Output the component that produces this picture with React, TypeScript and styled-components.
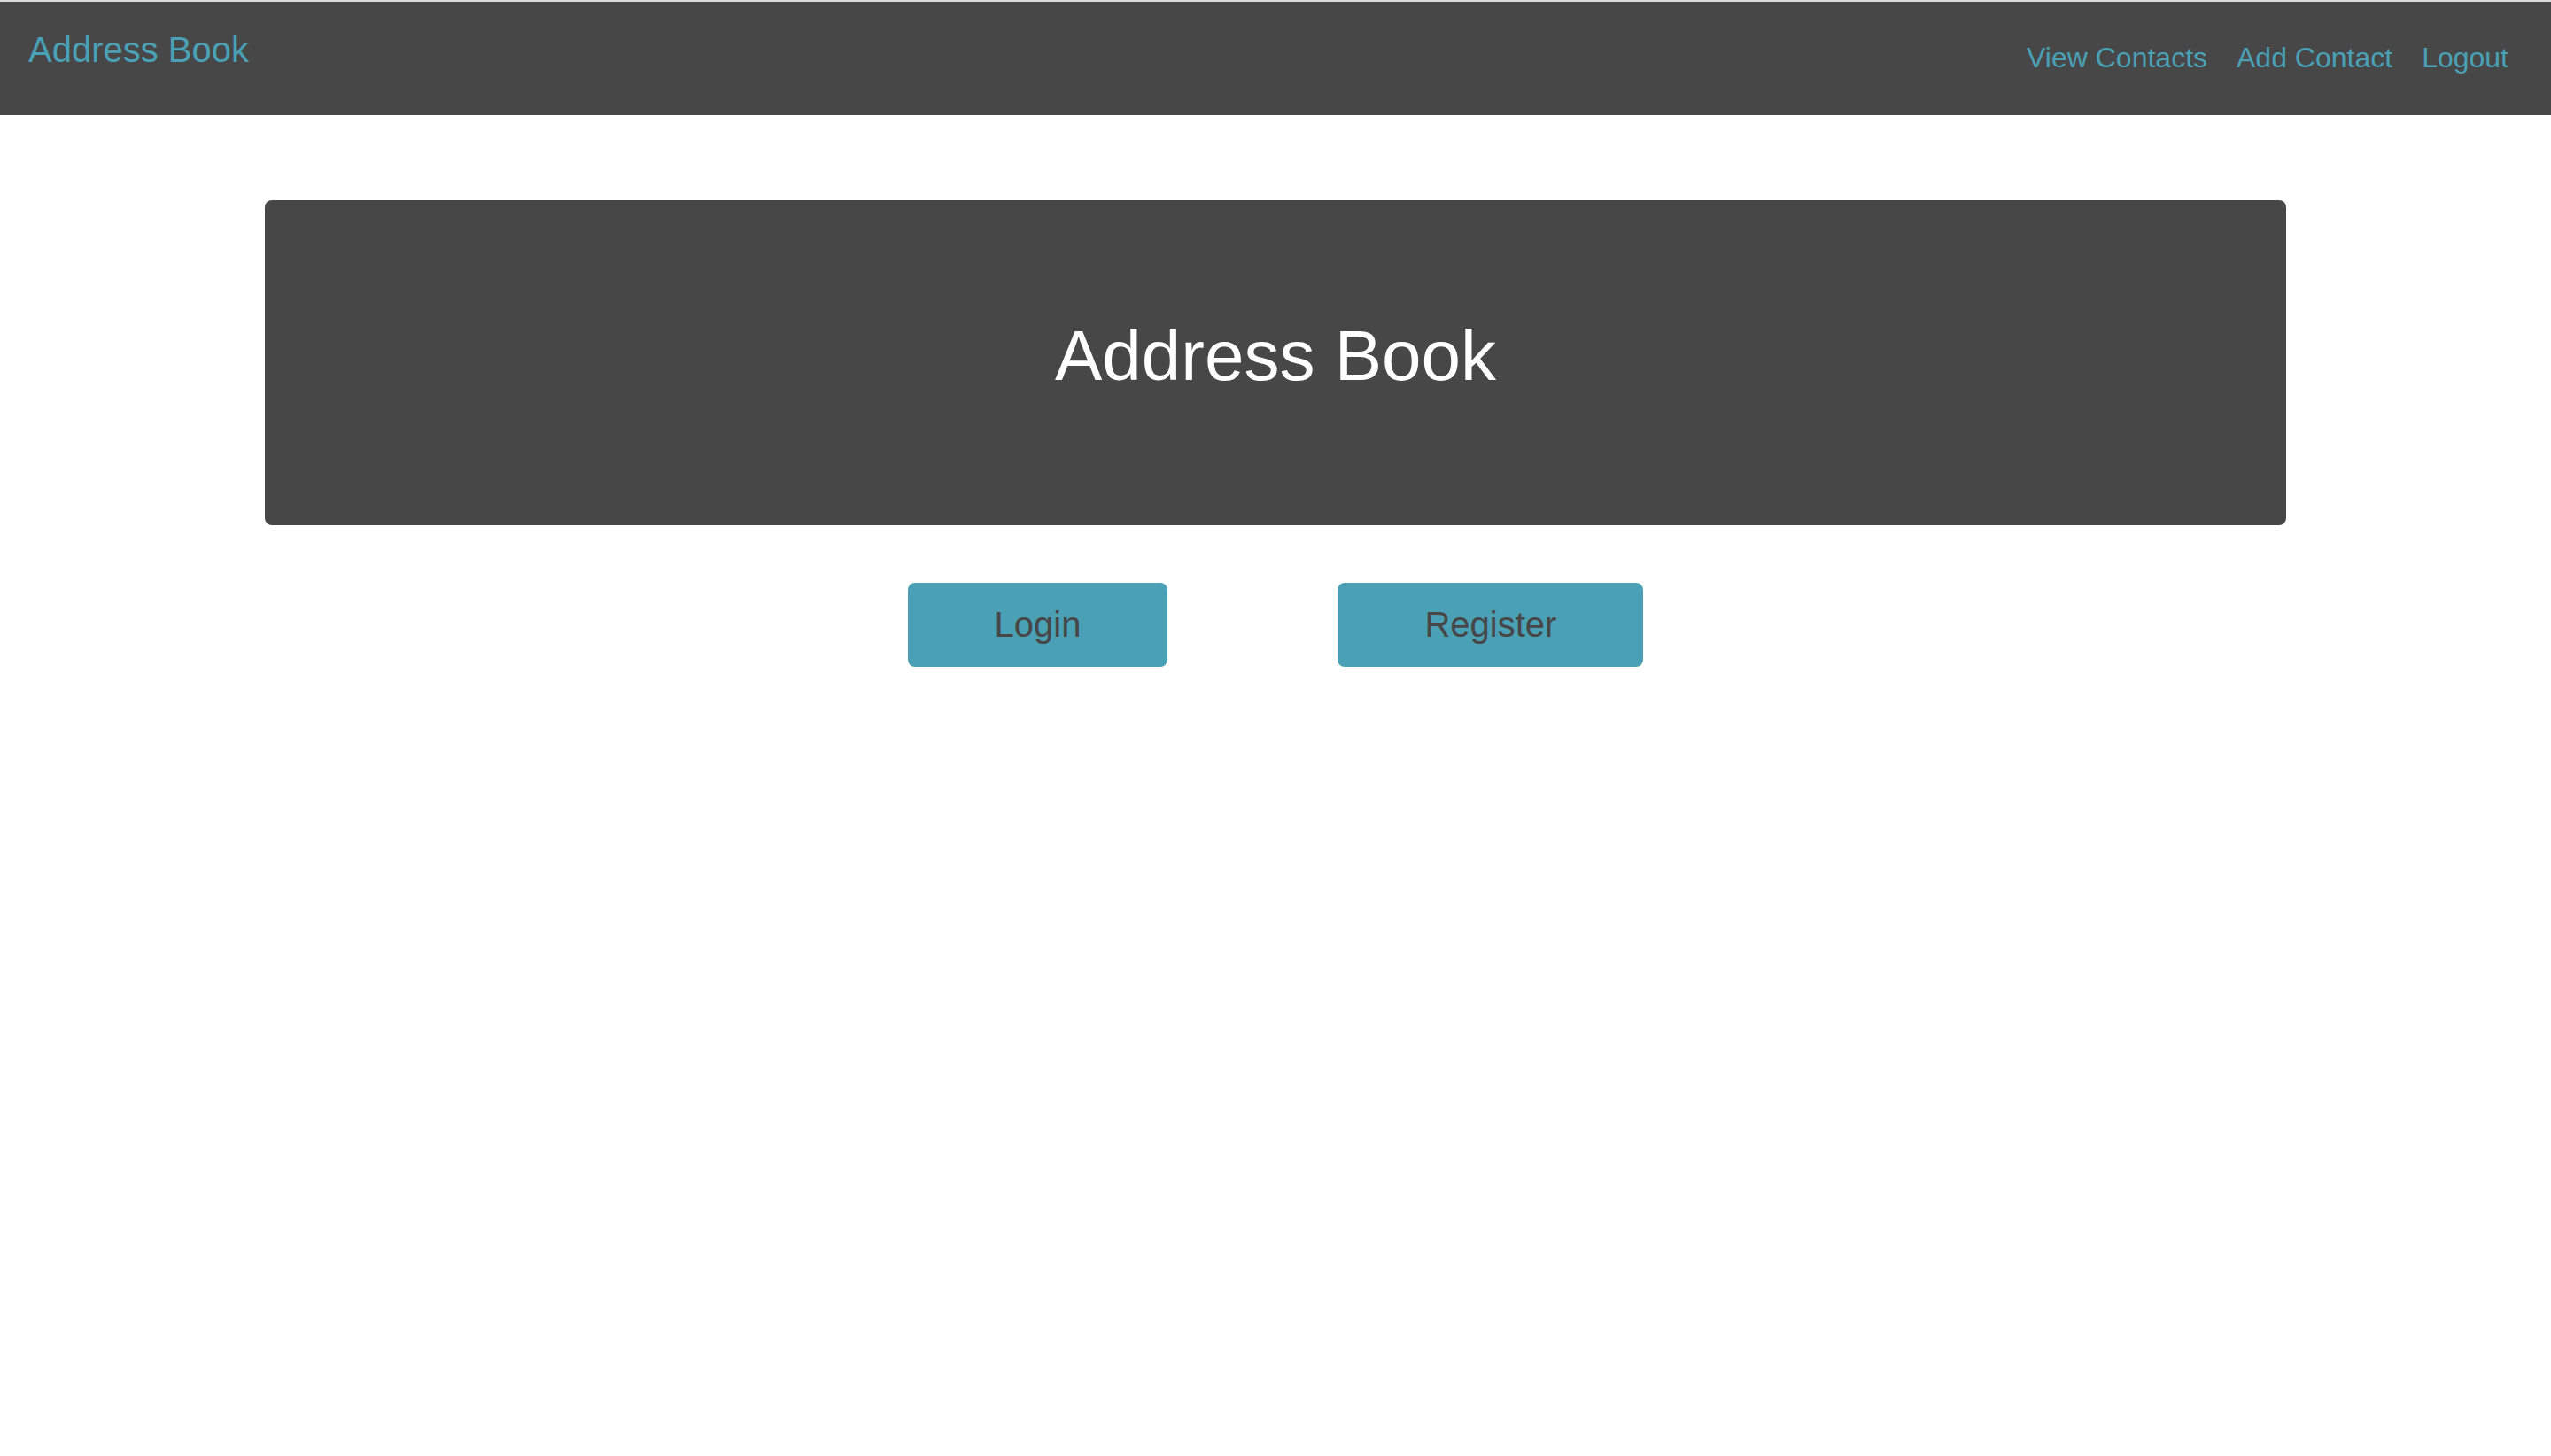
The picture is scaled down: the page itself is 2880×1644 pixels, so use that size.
import React from "react";
import styled, { createGlobalStyle } from "styled-components";

const GlobalStyle = createGlobalStyle`
  html, body {
    margin: 0;
    padding: 0;
    background: #ffffff;
    font-family: "Liberation Sans", Arial, Helvetica, sans-serif;
  }
  * { box-sizing: border-box; }
`;

const TEAL = "#4aa0b5";
const DARK = "#474747";

const NavBar = styled.nav`
  display: flex;
  align-items: flex-start;
  justify-content: space-between;
  height: 130px;
  border-top: 2px solid #dadada;
  background: ${DARK};
  padding: 24px 48px 0 32px;
`;

const Brand = styled.a`
  display: block;
  color: ${TEAL};
  font-size: 40px;
  line-height: 60px;
  text-decoration: none;
  cursor: pointer;
`;

const NavLinks = styled.ul`
  display: flex;
  gap: 33px;
  list-style: none;
  margin: 0;
  padding: 15px 0 0 0;
`;

const NavLink = styled.a`
  display: block;
  color: ${TEAL};
  font-size: 32px;
  line-height: 48px;
  text-decoration: none;
  cursor: pointer;
`;

const Main = styled.main`
  display: flex;
  flex-direction: column;
  align-items: center;
  padding: 96px 299px 0;
`;

const Hero = styled.section`
  width: 100%;
  height: 367px;
  background: ${DARK};
  border-radius: 8px;
  padding-top: 128px;
  text-align: center;
`;

const HeroTitle = styled.h1`
  margin: 0;
  color: #ffffff;
  font-size: 80px;
  line-height: 96px;
  font-weight: 400;
`;

const ButtonRow = styled.div`
  display: flex;
  justify-content: center;
  gap: 192px;
  margin-top: 65px;
`;

const ActionButton = styled.button`
  height: 95px;
  padding: 0 98px;
  border: none;
  border-radius: 8px;
  background: ${TEAL};
  color: ${DARK};
  font-family: "Liberation Sans", Arial, Helvetica, sans-serif;
  font-size: 40px;
  line-height: 95px;
  cursor: pointer;
`;

const links = ["View Contacts", "Add Contact", "Logout"];

export default function App() {
  return (
    <>
      <GlobalStyle />
      <NavBar>
        <Brand>Address Book</Brand>
        <NavLinks>
          {links.map((l) => (
            <li key={l}>
              <NavLink>{l}</NavLink>
            </li>
          ))}
        </NavLinks>
      </NavBar>
      <Main>
        <Hero>
          <HeroTitle>Address Book</HeroTitle>
        </Hero>
        <ButtonRow>
          <ActionButton>Login</ActionButton>
          <ActionButton>Register</ActionButton>
        </ButtonRow>
      </Main>
    </>
  );
}
